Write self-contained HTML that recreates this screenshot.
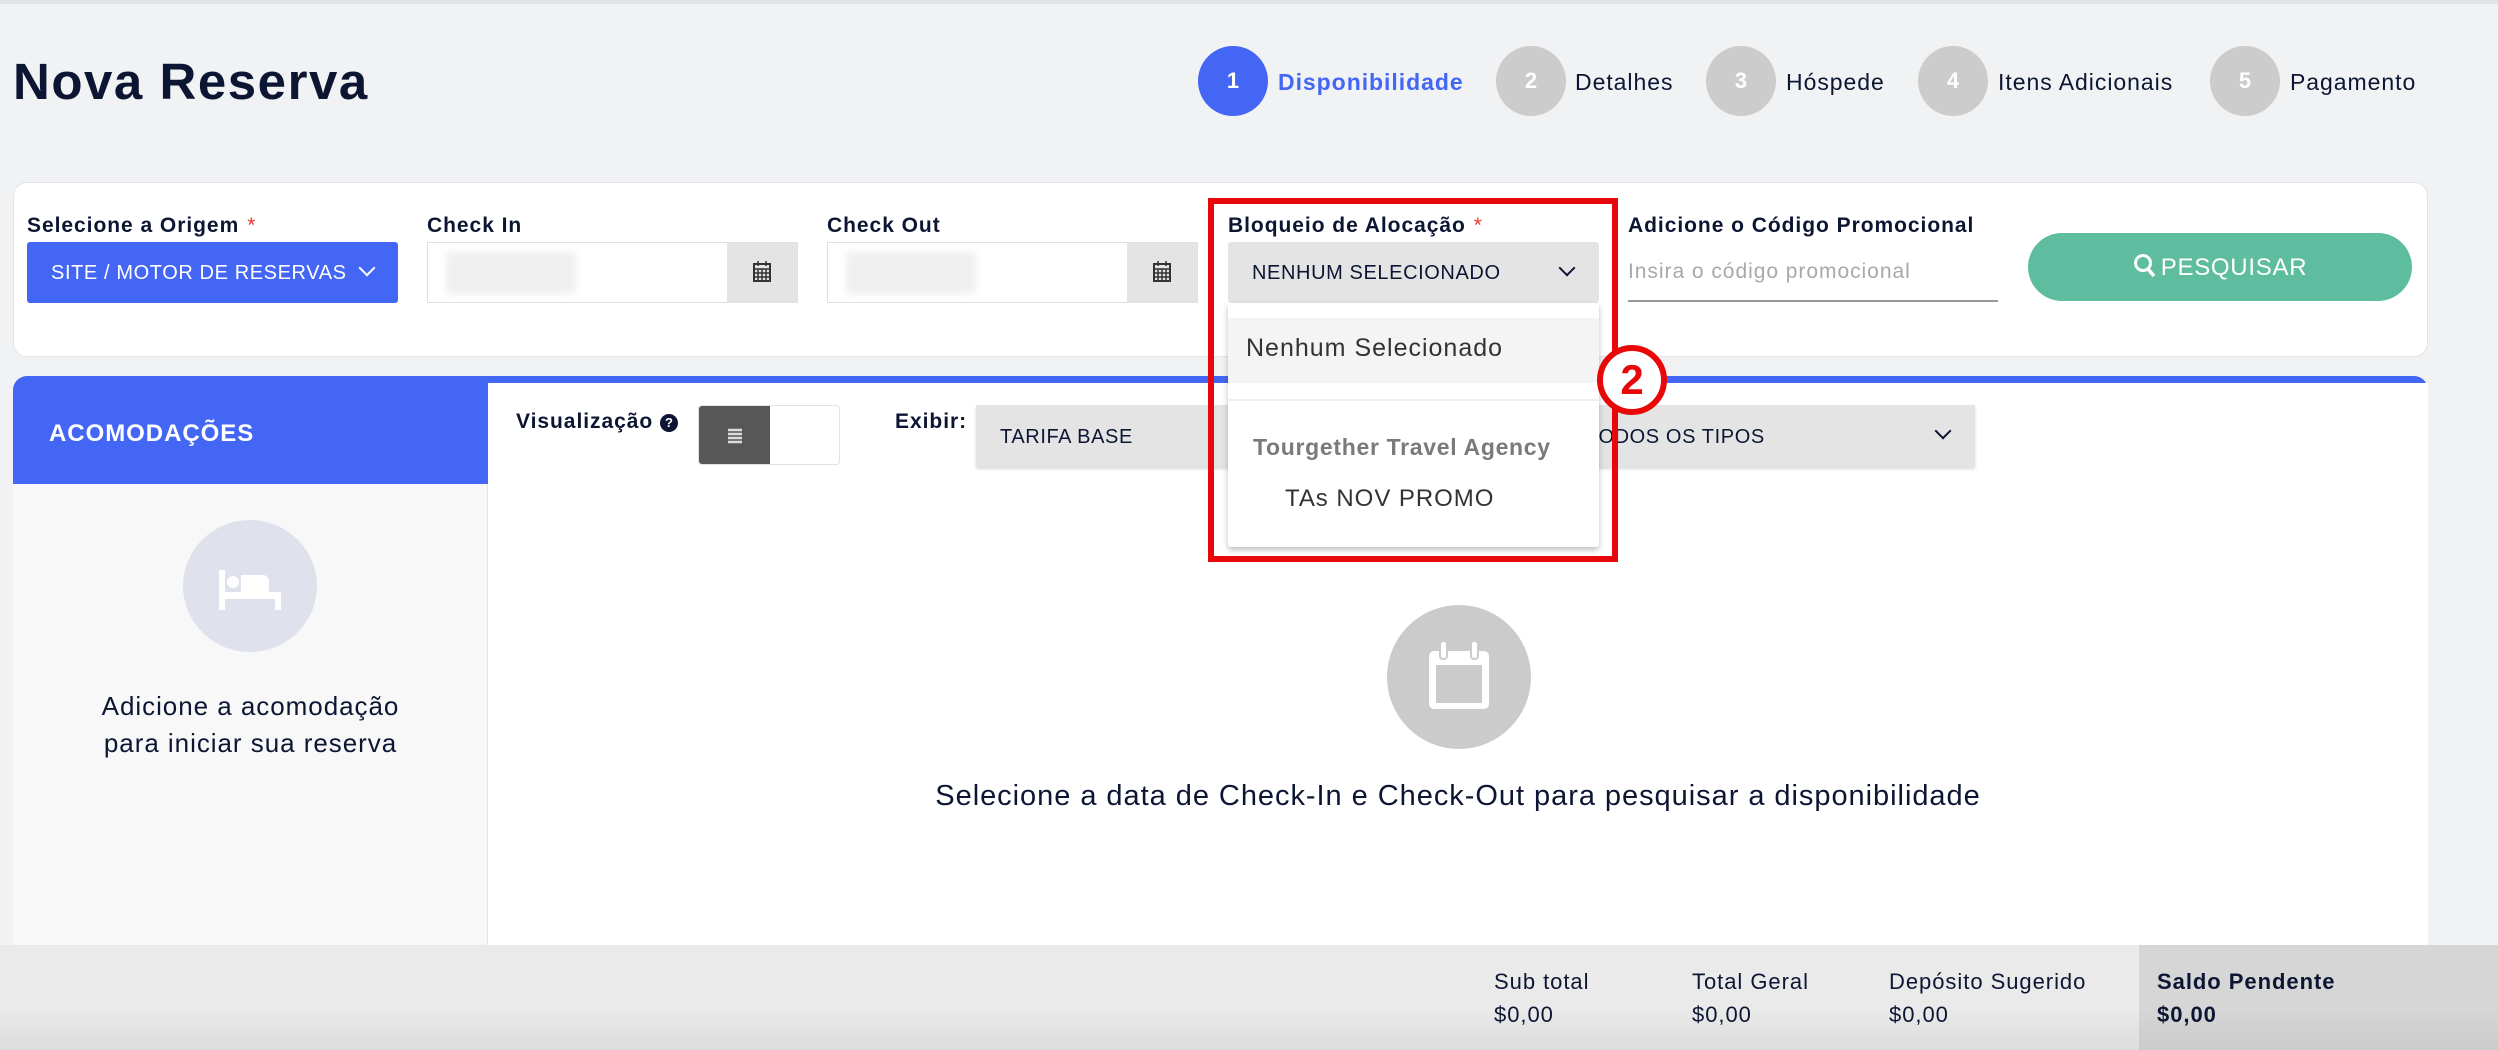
<!DOCTYPE html>
<html><head><meta charset="utf-8"><style>
*{box-sizing:border-box;margin:0;padding:0}
body{width:2498px;height:1050px;background:#f1f2f4;font-family:"Liberation Sans",sans-serif;color:#0c1633;position:relative;overflow:hidden;letter-spacing:0.06em}
.a{position:absolute}
.topline{left:0;top:0;width:2498px;height:4px;background:#e2e3e6}
h1{position:absolute;left:13px;top:52px;font-size:51px;font-weight:bold;color:#0c1633;letter-spacing:0.03em}
.circ{position:absolute;width:70px;height:70px;border-radius:50%;background:#cccccc;color:#fff;font-weight:bold;font-size:22px;text-align:center;line-height:70px;top:46px;letter-spacing:0}
.st{position:absolute;top:69px;font-size:23px;color:#0c1633}
.card{left:13px;top:182px;width:2415px;height:175px;background:#fff;border:1px solid #e3e4e7;border-radius:14px}
.lbl{position:absolute;top:214px;font-size:21px;font-weight:bold;color:#0c1633}
.req{color:#e53935;font-weight:normal;margin-left:8px}
.sel{position:absolute;top:242px;height:61px;font-size:20px;line-height:63px;padding-left:24px;letter-spacing:0.03em}
.inp{position:absolute;top:242px;height:61px;border:1px solid #e0e0e0;background:#fff}
.addon{position:absolute;top:0;right:0;width:70px;height:59px;background:#e4e4e4}
.blur{position:absolute;left:18px;top:9px;width:130px;height:42px;background:#efefef;filter:blur(4px)}
.chev{position:absolute;width:12px;height:12px;border-right:2.5px solid #0c1633;border-bottom:2.5px solid #0c1633;transform:rotate(45deg)}
</style></head><body>
<div class="a topline"></div>
<h1>Nova Reserva</h1>

<div class="circ" style="left:1198px;background:#4466f5">1</div>
<div class="st" style="left:1278px;color:#4466f5;font-weight:bold">Disponibilidade</div>
<div class="circ" style="left:1496px">2</div>
<div class="st" style="left:1575px">Detalhes</div>
<div class="circ" style="left:1706px">3</div>
<div class="st" style="left:1786px">Hóspede</div>
<div class="circ" style="left:1918px">4</div>
<div class="st" style="left:1998px">Itens Adicionais</div>
<div class="circ" style="left:2210px">5</div>
<div class="st" style="left:2290px">Pagamento</div>

<div class="a card"></div>
<div class="lbl" style="left:27px">Selecione a Origem<span class="req">*</span></div>
<div class="sel" style="left:27px;width:371px;background:#4466f5;color:#fff;border-radius:3px">SITE / MOTOR DE RESERVAS<div class="chev" style="left:334px;top:20px;border-color:#fff"></div></div>
<div class="lbl" style="left:427px">Check In</div>
<div class="inp" style="left:427px;width:371px"><div class="blur"></div><div class="addon"><svg width="70" height="59" viewBox="0 0 70 59"><rect x="27" y="21" width="16" height="17" fill="none" stroke="#333" stroke-width="2"/><path d="M27 26H43M31 18v5M39 18v5M27 30H43M27 34H43M31 26v12M35 26v12M39 26v12" stroke="#333" stroke-width="1.5"/></svg></div></div>
<div class="lbl" style="left:827px">Check Out</div>
<div class="inp" style="left:827px;width:371px"><div class="blur"></div><div class="addon"><svg width="70" height="59" viewBox="0 0 70 59"><rect x="27" y="21" width="16" height="17" fill="none" stroke="#333" stroke-width="2"/><path d="M27 26H43M31 18v5M39 18v5M27 30H43M27 34H43M31 26v12M35 26v12M39 26v12" stroke="#333" stroke-width="1.5"/></svg></div></div>
<div class="lbl" style="left:1228px">Bloqueio de Alocação<span class="req">*</span></div>
<div class="sel" style="left:1228px;width:371px;background:#e4e4e4;color:#0c1633;border-radius:3px">NENHUM SELECIONADO<div class="chev" style="left:333px;top:20px"></div></div>
<div class="lbl" style="left:1628px">Adicione o Código Promocional</div>
<div class="a" style="left:1628px;top:260px;font-size:21px;color:#a8a8a8">Insira o código promocional</div>
<div class="a" style="left:1628px;top:300px;width:370px;height:2px;background:#999"></div>
<div class="a" style="left:2028px;top:233px;width:384px;height:68px;border-radius:34px;background:#5fbd9f;color:#fff;font-size:24px;line-height:70px;text-align:center;letter-spacing:0.03em"><svg width="24" height="26" viewBox="0 0 24 26" style="vertical-align:-4px;margin-right:4px"><circle cx="10" cy="10" r="7.5" fill="none" stroke="#fff" stroke-width="3"/><path d="M15 16l6 7" stroke="#fff" stroke-width="3.5"/></svg>PESQUISAR</div>

<!-- main panel -->
<div class="a" style="left:13px;top:376px;width:2415px;height:580px;background:#4466f5;border-radius:14px 14px 0 0"></div>
<div class="a" style="left:488px;top:383px;width:1940px;height:570px;background:#fff"></div>
<div class="a" style="left:13px;top:484px;width:475px;height:470px;background:#f8f8f9;border-right:1px solid #e3e3e3"></div>
<div class="a" style="left:49px;top:420px;font-size:24px;font-weight:bold;color:#fff">ACOMODAÇÕES</div>
<div class="a" style="left:183px;top:520px;width:134px;height:132px;border-radius:50%;background:#dfe1ec"><svg width="134" height="132" viewBox="0 0 134 132"><rect x="36" y="50" width="6" height="40" fill="#fff"/><circle cx="50" cy="62" r="6" fill="#fff"/><path d="M58 55h22a6 6 0 0 1 6 6v12H58z" fill="#fff"/><rect x="36" y="72" width="62" height="7" fill="#fff"/><rect x="92" y="72" width="6" height="18" fill="#fff"/></svg></div>
<div class="a" style="left:13px;top:688px;width:475px;text-align:center;font-size:26px;line-height:37px;color:#0c1633">Adicione a acomodação<br>para iniciar sua reserva</div>

<div class="a" style="left:516px;top:410px;font-size:21px;font-weight:bold">Visualização <span style="display:inline-block;width:18px;height:18px;border-radius:50%;background:#0c1633;color:#fff;font-size:13px;line-height:18px;text-align:center;vertical-align:1px;letter-spacing:0">?</span></div>
<div class="a" style="left:698px;top:405px;width:142px;height:60px;border:1px solid #e3e3e3;border-radius:4px;background:#fff;overflow:hidden"><div style="width:71px;height:60px;background:#575757"><svg width="71" height="60" viewBox="0 0 71 60"><path d="M29 24h14M29 28h14M29 32h14M29 36h14" stroke="#ddd" stroke-width="2.5"/></svg></div></div>
<div class="a" style="left:895px;top:410px;font-size:21px;font-weight:bold">Exibir:</div>
<div class="a" style="left:976px;top:405px;width:620px;height:62px;background:#e4e4e4;box-shadow:0 2px 3px rgba(0,0,0,.15);font-size:20px;line-height:64px;padding-left:24px;letter-spacing:0.03em">TARIFA BASE</div>
<div class="a" style="left:1576px;top:405px;width:399px;height:62px;background:#e4e4e4;box-shadow:0 2px 3px rgba(0,0,0,.15);font-size:20px;line-height:64px;padding-left:10px;letter-spacing:0.03em">TODOS OS TIPOS<div class="chev" style="left:361px;top:20px"></div></div>

<div class="a" style="left:1387px;top:605px;width:144px;height:144px;border-radius:50%;background:#cbcbcb"><svg width="144" height="144" viewBox="0 0 144 144"><rect x="42" y="46" width="60" height="58" rx="5" fill="#fff"/><rect x="49" y="60" width="46" height="38" fill="#cbcbcb"/><rect x="53" y="36" width="7" height="18" rx="3" fill="#fff" stroke="#cbcbcb" stroke-width="2"/><rect x="84" y="36" width="7" height="18" rx="3" fill="#fff" stroke="#cbcbcb" stroke-width="2"/></svg></div>
<div class="a" style="left:488px;top:780px;width:1940px;text-align:center;font-size:29px;color:#0c1633">Selecione a data de Check-In e Check-Out para pesquisar a disponibilidade</div>

<!-- footer -->
<div class="a" style="left:0;top:945px;width:2498px;height:105px;background:linear-gradient(#eaeaea 60%,#dcdcdc)"></div>
<div class="a" style="left:2139px;top:945px;width:359px;height:105px;background:linear-gradient(#d6d6d6 60%,#cbcbcb)"></div>
<div class="a" style="left:1494px;top:965px;font-size:22px;line-height:33px">Sub total<br>$0,00</div>
<div class="a" style="left:1692px;top:965px;font-size:22px;line-height:33px">Total Geral<br>$0,00</div>
<div class="a" style="left:1889px;top:965px;font-size:22px;line-height:33px">Depósito Sugerido<br>$0,00</div>
<div class="a" style="left:2157px;top:965px;font-size:22px;line-height:33px;font-weight:bold">Saldo Pendente<br>$0,00</div>

<!-- dropdown -->
<div class="a" style="left:1228px;top:303px;width:371px;height:244px;background:#fff;box-shadow:0 3px 6px rgba(0,0,0,.25);border-radius:0 0 3px 3px">
<div style="position:absolute;left:0;top:15px;width:371px;height:65px;background:#f4f4f4"></div>
<div style="position:absolute;left:18px;top:31px;font-size:25px;color:#333;letter-spacing:0.04em">Nenhum Selecionado</div>
<div style="position:absolute;left:0;top:96px;width:371px;height:2px;background:#f0f0f0"></div>
<div style="position:absolute;left:25px;top:131px;font-size:23px;font-weight:bold;color:#7a7a7a;letter-spacing:0.03em">Tourgether Travel Agency</div>
<div style="position:absolute;left:57px;top:182px;font-size:24px;color:#333;letter-spacing:0.04em">TAs NOV PROMO</div>
</div>
<div class="a" style="left:1208px;top:198px;width:410px;height:364px;border:6px solid #e8080a"></div>
<div class="a" style="left:1597px;top:345px;width:70px;height:70px;border-radius:50%;border:6px solid #e8080a;background:#fff;color:#e8080a;font-weight:bold;font-size:42px;line-height:58px;text-align:center;letter-spacing:0">2</div>
</body></html>
